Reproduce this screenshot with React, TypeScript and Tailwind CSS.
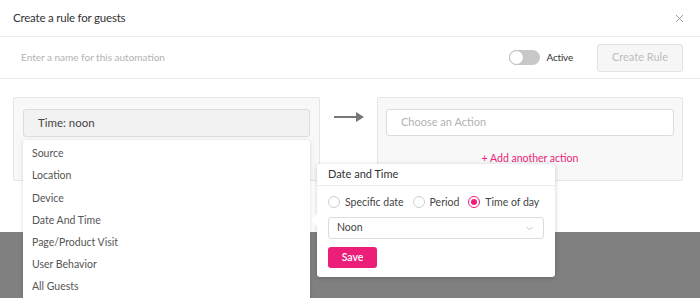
import React from 'react';
import { X, ChevronDown } from 'lucide-react';

const menuItems = ['Source', 'Location', 'Device', 'Date And Time', 'Page/Product Visit', 'User Behavior', 'All Guests'];

const Radio: React.FC<{ label: string; checked?: boolean }> = ({ label, checked }) => (
  <label className="flex items-center gap-[5px] whitespace-nowrap">
    <span
      className={`w-[12px] h-[12px] rounded-full border flex items-center justify-center ${
        checked ? 'border-[#eb1e79]' : 'border-[#cfcfcf]'
      }`}
    >
      {checked && <span className="w-[6px] h-[6px] rounded-full bg-[#eb1e79]" />}
    </span>
    <span className="text-[10.5px] leading-[14px] text-[#444]">{label}</span>
  </label>
);

const App: React.FC = () => {
  return (
    <div className="relative w-[700px] h-[298px] overflow-hidden bg-[#808080] font-['Lato',sans-serif]">
      <div className="bg-white h-[232px]">
        {/* header */}
        <div className="h-[37px] flex items-center justify-between pl-[13px] pr-[14px] border-b border-[#ececec]">
          <h1 className="text-[11.5px] tracking-[-0.2px] text-[#333]">Create a rule for guests</h1>
          <X className="w-[13px] h-[13px] text-[#888]" strokeWidth={1.5} />
        </div>

        {/* name row */}
        <div className="h-[42px] flex items-center pl-[21px] pr-[17px] border-b border-[#ececec]">
          <span className="text-[10px] text-[#b3b3b3] flex-1">Enter a name for this automation</span>
          <div className="flex items-center">
            <span className="relative w-[31px] h-[15px] rounded-full bg-[#c8c8c8]">
              <span className="absolute left-0 top-0 w-[15px] h-[15px] rounded-full bg-white border border-[#bdbdbd]" />
            </span>
            <span className="ml-[7px] text-[10px] tracking-[-0.2px] text-[#333]">Active</span>
          </div>
          <button className="ml-[24px] w-[86px] h-[28px] rounded-[3px] border border-[#e3e3e3] bg-[#f6f6f6] text-[11px] text-[#bdbdbd]">
            Create Rule
          </button>
        </div>

        {/* rule body */}
        <div className="flex items-center pt-[18px] px-[13px]">
          <div className="w-[307px] h-[84px] self-start bg-[#f8f8f8] border border-[#e6e6e6] rounded-[2px] pt-[11px] px-[9px]">
            <div className="h-[28px] flex items-center px-[14px] bg-[#f2f2f2] border border-[#dcdcdc] rounded-[3px] text-[11.5px] text-[#444]">
              Time: noon
            </div>
          </div>
          <div className="w-[57px] self-start pt-[15px] flex justify-center">
            <svg width="30" height="10" viewBox="0 0 30 10">
              <line x1="0" y1="5" x2="24" y2="5" stroke="#777" strokeWidth="2" />
              <polygon points="22,0 30,5 22,10" fill="#777" />
            </svg>
          </div>
          <div className="w-[306px] h-[84px] self-start bg-[#f8f8f8] border border-[#e6e6e6] rounded-[2px] pt-[11px] px-[8px] flex flex-col">
            <div className="h-[27px] flex items-center px-[14px] bg-white border border-[#dcdcdc] rounded-[3px] text-[11px] text-[#b3b3b3]">
              Choose an Action
            </div>
            <div className="mt-[15px] text-center text-[10.5px] text-[#eb1e79]">+ Add another action</div>
          </div>
        </div>
      </div>

      {/* condition dropdown */}
      <ul className="absolute left-[23px] top-[140px] w-[287px] h-[170px] bg-white rounded-t-[3px] shadow-[0_1px_4px_rgba(0,0,0,0.15)] pt-[3px]">
        {menuItems.map((item) => (
          <li key={item} className="h-[22.2px] flex items-center px-[9px] text-[10.5px] text-[#555]">
            {item}
          </li>
        ))}
      </ul>

      {/* date & time popover */}
      <div className="absolute left-[317px] top-[164px] w-[238px] h-[113px] bg-white rounded-[3px] shadow-[0_1px_5px_rgba(0,0,0,0.2)]">
        <span className="absolute -left-[4px] top-[52px] w-[8px] h-[8px] bg-white rotate-45" />
        <div className="h-[22px] flex items-center px-[11px] border-b border-[#ececec] text-[11px] text-[#333]">
          Date and Time
        </div>
        <div className="px-[11px] pt-[9px]">
          <div className="h-[14px] flex items-center gap-[9px]">
            <Radio label="Specific date" />
            <Radio label="Period" />
            <Radio label="Time of day" checked />
          </div>
          <div className="mt-[8px] h-[22px] flex items-center justify-between px-[8px] border border-[#dcdcdc] rounded-[3px]">
            <span className="text-[10.5px] text-[#444]">Noon</span>
            <ChevronDown className="w-[11px] h-[11px] text-[#aaa]" strokeWidth={1.5} />
          </div>
          <button className="mt-[8px] w-[49px] h-[21px] rounded-[3px] bg-[#eb1e79] text-white text-[10.5px] font-semibold">
            Save
          </button>
        </div>
      </div>
    </div>
  );
};

export default App;
